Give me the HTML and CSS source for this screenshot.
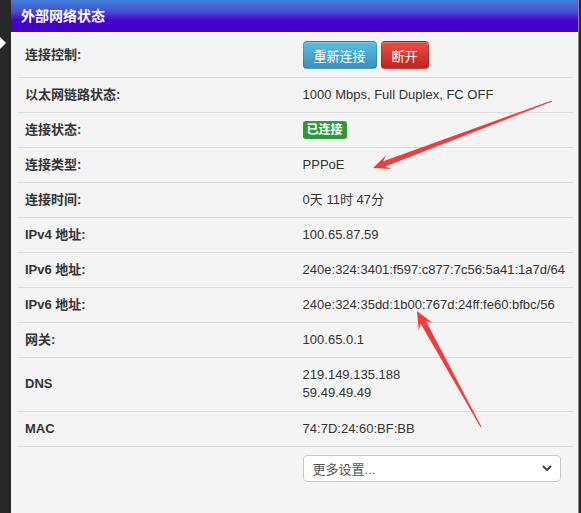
FILE: index.html
```html
<!DOCTYPE html>
<html lang="zh-CN">
<head>
<meta charset="utf-8">
<title>外部网络状态</title>
<link rel="stylesheet" href="styles.css">
</head>
<body>
<div class="page">
  <div class="side"><span class="tri"></span></div>
  <div class="panel">
    <div class="panel-head">外部网络状态</div>
    <table class="info">
      <tr class="row-ctrl">
        <th><div class="c">连接控制:</div></th>
        <td><div class="btns"><button class="btn btn-info">重新连接</button><button class="btn btn-danger">断开</button></div></td>
      </tr>
      <tr><th><div class="c">以太网链路状态:</div></th><td><div class="c">1000 Mbps, Full Duplex, FC OFF</div></td></tr>
      <tr><th><div class="c">连接状态:</div></th><td><div class="c"><span class="badge">已连接</span></div></td></tr>
      <tr><th><div class="c">连接类型:</div></th><td><div class="c">PPPoE</div></td></tr>
      <tr><th><div class="c">连接时间:</div></th><td><div class="c">0天 11时 47分</div></td></tr>
      <tr><th><div class="c">IPv4 地址:</div></th><td><div class="c">100.65.87.59</div></td></tr>
      <tr><th><div class="c">IPv6 地址:</div></th><td><div class="c">240e:324:3401:f597:c877:7c56:5a41:1a7d/64</div></td></tr>
      <tr><th><div class="c">IPv6 地址:</div></th><td><div class="c">240e:324:35dd:1b00:767d:24ff:fe60:bfbc/56</div></td></tr>
      <tr><th><div class="c">网关:</div></th><td><div class="c">100.65.0.1</div></td></tr>
      <tr class="row-dns"><th><div class="c">DNS</div></th><td><div class="c">219.149.135.188</div><div class="c">59.49.49.49</div></td></tr>
      <tr><th><div class="c">MAC</div></th><td><div class="c">74:7D:24:60:BF:BB</div></td></tr>
      <tr class="row-last">
        <th></th>
        <td><div class="select"><span>更多设置...</span><svg class="chev" width="10" height="7" viewBox="0 0 10 7"><polyline points="1,1 5,5 9,1" fill="none" stroke="#444" stroke-width="2"/></svg></div></td>
      </tr>
    </table>
  </div>
</div>
<svg class="arrows" width="581" height="513" viewBox="0 0 581 513">
  <polygon fill="#f23c3c" points="373,168 386.3,155 383.2,161.2 551.8,100.4 552.2,101.6 385.2,166.4 391.5,169"/>
  <polygon fill="#f23c3c" points="417,311 432.7,322.9 425.9,321 481.5,426.7 480.5,427.3 420.7,323.8 418.7,330.6"/>
</svg>
</body>
</html>
```

FILE: styles.css
```css
html, body {
  margin: 0;
  padding: 0;
}
body {
  background: #282828;
  font-family: "Liberation Sans", "Noto Sans CJK SC", sans-serif;
  color: #333;
  overflow: hidden;
  width: 581px;
  height: 513px;
  position: relative;
}
.page {
  display: flex;
  align-items: flex-start;
}
.side {
  width: 11px;
  flex: none;
}
.tri {
  display: block;
  margin-top: 37px;
  width: 0;
  height: 0;
  border-top: 6px solid transparent;
  border-bottom: 6px solid transparent;
  border-left: 6px solid #fff;
}
.panel {
  width: 567px;
  flex: none;
  background: #f4f4f4;
  min-height: 560px;
  border-right: 1px solid #8a8a8a;
}
.panel-head {
  height: 32px;
  line-height: 32px;
  padding-left: 10px;
  color: #fff;
  font-weight: bold;
  font-size: 14px;
  background: linear-gradient(to bottom, #3f7fd7 0%, #4650d2 35%, #4400cc 65%, #4400cc 100%);
}
.info {
  border-collapse: collapse;
  margin: 0 6px;
  width: 556px;
}
.info th, .info td {
  padding: 8px 8px;
  font-size: 13px;
  text-align: left;
  vertical-align: middle;
  border-bottom: 1px solid #dcdcdc;
}
.c {
  height: 18px;
  line-height: 18px;
  white-space: nowrap;
}
.info th {
  width: 270px;
  font-weight: bold;
  color: #333;
}
.info td {
  color: #333;
}
.row-ctrl th, .row-ctrl td {
  padding-top: 9px;
  padding-bottom: 8px;
}
.row-dns th, .row-dns td {
  padding-bottom: 9px;
}
.row-last th, .row-last td {
  border-bottom: none;
}
.btns {
  display: flex;
  gap: 4px;
}
.btn {
  height: 28px;
  padding: 0 10px;
  font-family: "Liberation Sans", "Noto Sans CJK SC", sans-serif;
  font-size: 13px;
  color: #fff;
  border: 1px solid rgba(0, 0, 0, 0.15);
  border-radius: 4px;
  box-shadow: inset 0 1px 0 rgba(255, 255, 255, 0.2);
}
.btn-info {
  width: 74px;
  background: linear-gradient(to bottom, #5bbde0, #3a8fb8);
}
.btn-danger {
  width: 48px;
  background: linear-gradient(to bottom, #ec4e48, #bf251c);
}
.badge {
  display: inline-block;
  vertical-align: top;
  background: #2f983b;
  color: #fff;
  font-weight: bold;
  font-size: 12px;
  height: 18px;
  line-height: 18px;
  padding: 0 4px;
  border-radius: 3px;
}
.select {
  display: flex;
  align-items: center;
  justify-content: space-between;
  width: 258px;
  height: 27px;
  box-sizing: border-box;
  padding: 0 8px 0 9px;
  background: #fff;
  border: 1px solid #c8c8c8;
  border-radius: 4px;
  color: #555;
  font-size: 13px;
}
.arrows {
  position: absolute;
  top: 0;
  left: 0;
  pointer-events: none;
}
```
